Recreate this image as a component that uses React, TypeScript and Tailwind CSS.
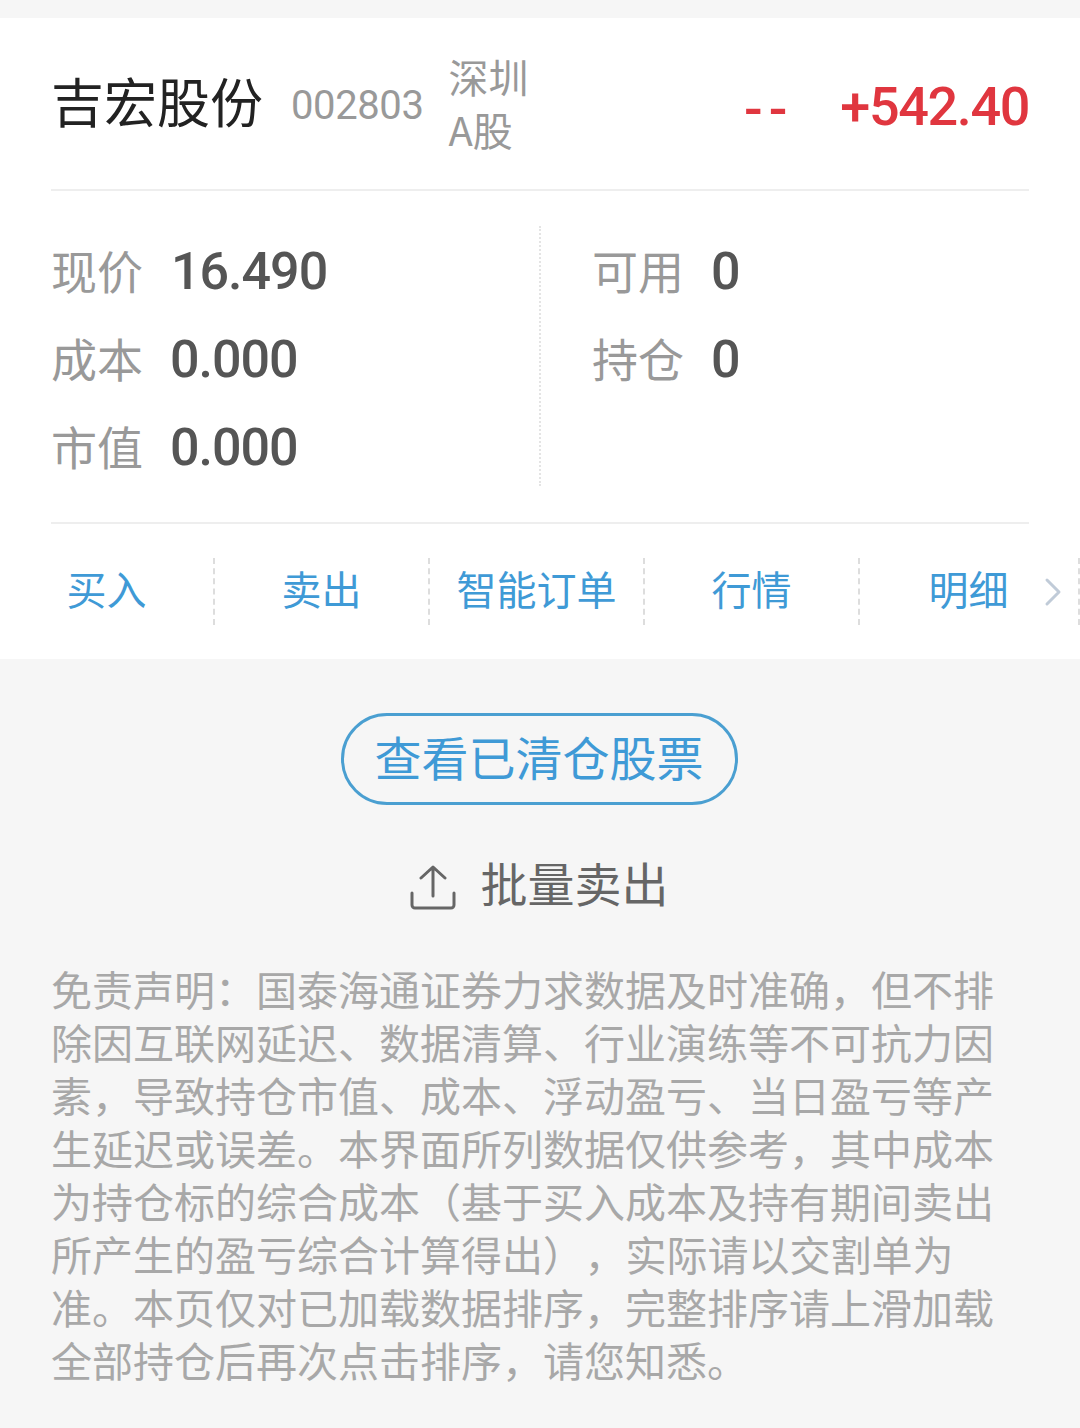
const cjk = 'font-["Noto_Sans_CJK_SC",sans-serif]';
const num = 'font-["Roboto","Noto_Sans_CJK_SC",sans-serif]';

const StatRow = ({ label, value, gap = 'ml-[27px]' }: { label: string; value: string; gap?: string }) => (
  <div className="flex h-[88px] items-center">
    <span className={`${cjk} pb-[7px] text-[46px] leading-none text-[#999999]`}>{label}</span>
    <span className={`${num} ${gap} text-[52px] leading-none font-medium tracking-[-1px] text-[#555555]`}>{value}</span>
  </div>
);

const actions = ['买入', '卖出', '智能订单', '行情', '明细'];

// full-width punctuation, written as escapes
const colon = '\uFF1A';
const comma = '\uFF0C';
const open = '\uFF08';
const close = '\uFF09';
const disclaimerStart =
  `免责声明${colon}国泰海通证券力求数据及时准确${comma}但不排除因互联网延迟、数据清算、行业演练等不可抗力因素${comma}` +
  `导致持仓市值、成本、浮动盈亏、当日盈亏等产生延迟或误差。本界面所列数据仅供参考${comma}其中成本为持仓标的综合成本` +
  `${open}基于买入成本及持有期间卖出所产生的盈亏综合计算得出${close}`;
const disclaimerEnd =
  `实际请以交割单为准。本页仅对已加载数据排序${comma}完整排序请上滑加载全部持仓后再次点击排序${comma}请您知悉。`;

export default function App() {
  return (
    <div className="h-[1428px] w-[1080px] overflow-hidden bg-[#f6f6f6] pt-[18px]">
      <div className="h-[641px] bg-white">
        <div className="mx-[51px] flex h-[173px] items-center border-b-2 border-[#eeeeee]">
          <span className={`${cjk} pb-[6px] text-[53px] leading-none text-[#222222]`}>吉宏股份</span>
          <span className={`${num} ml-[28px] pt-[4px] text-[40px] leading-none tracking-[-0.4px] text-[#999999]`}>002803</span>
          <span className={`${cjk} ml-[25px] w-[84px] pb-[2px] text-[40px] leading-[53px] text-[#999999]`}>深圳A股</span>
          <span className={`${num} ml-auto pt-[12px] text-[55px] leading-none font-medium tracking-[6px] text-[#e0363f]`}>--</span>
          <span className={`${num} ml-[47px] pt-[6px] text-[54px] leading-none font-medium tracking-[-1.4px] text-[#e0363f]`}>+542.40</span>
        </div>

        <div className="mx-[51px] mt-[35px] flex h-[260px]">
          <div className="h-full w-[490px] border-r-2 border-dotted border-[#e4e4e4] pt-[2px]">
            <StatRow label="现价" value="16.490" gap="ml-[28px]" />
            <StatRow label="成本" value="0.000" />
            <StatRow label="市值" value="0.000" />
          </div>
          <div className="pt-[2px] pl-[51px]">
            <StatRow label="可用" value="0" />
            <StatRow label="持仓" value="0" />
          </div>
        </div>

        <div className="mx-[51px] mt-[36px] h-[2px] bg-[#eeeeee]" />

        <div className="mt-[34px] grid h-[67px] grid-cols-[215px_215px_215px_215px_220px]">
          {actions.map((a, i) => (
            <div key={a} className="relative flex items-center justify-center border-r-2 border-dashed border-[#dddddd]">
              <span className={`${cjk} pb-[7px] text-[40px] leading-none text-[#3f9ad6] ${i === 4 ? 'mr-[1px]' : ''}`}>{a}</span>
              {i === 4 && (
                <svg className="absolute top-[19px] left-[184px]" width="18" height="30" viewBox="0 0 18 30" fill="none">
                  <path d="M3 3l12 12L3 27" stroke="#c0cbd8" strokeWidth="3" strokeLinecap="round" strokeLinejoin="round" />
                </svg>
              )}
            </div>
          ))}
        </div>
      </div>

      <div className="mt-[54px] flex justify-center pr-[2px]">
        <div className="flex h-[92px] w-[397px] items-center justify-center rounded-full border-[3px] border-[#4a9fd1] pb-[7px]">
          <span className={`${cjk} text-[47px] leading-none text-[#3f9ad6]`}>查看已清仓股票</span>
        </div>
      </div>

      <div className="mt-[53px] flex items-center justify-center pr-[2px]">
        <svg width="46" height="46" viewBox="0 0 46 46" fill="none" className="mt-[4px] mr-[25px]">
          <path d="M2 28v12a3 3 0 0 0 3 3h36a3 3 0 0 0 3-3V28" stroke="#666666" strokeWidth="3" strokeLinecap="round" />
          <path d="M23 31V3M11 13 23 2l12 11" stroke="#666666" strokeWidth="3" strokeLinecap="round" strokeLinejoin="round" />
        </svg>
        <span className={`${cjk} pb-[8px] text-[47px] leading-none text-[#666666]`}>批量卖出</span>
      </div>

      <p className={`${cjk} mt-[49px] ml-[51px] w-[950px] text-[41px] leading-[53px] text-[#a8a8a8]`}>
        {disclaimerStart}
        <span className="ml-[21px]">{comma}</span>
        {disclaimerEnd}
      </p>
    </div>
  );
}
